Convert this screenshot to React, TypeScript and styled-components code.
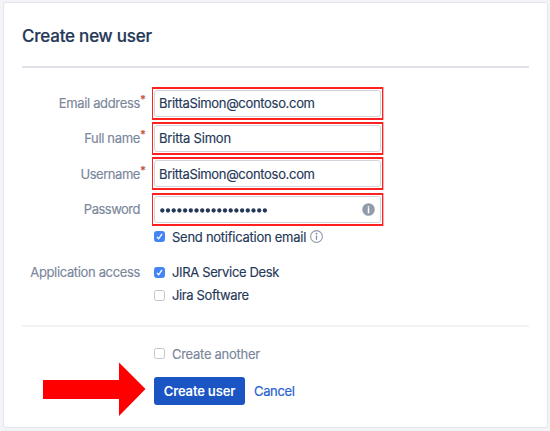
import React from "react";
import styled, { createGlobalStyle } from "styled-components";

const GlobalStyle = createGlobalStyle`
  * { box-sizing: border-box; }
  body {
    margin: 0;
    background: #f3f4f7;
    font-family: Inter, "Liberation Sans", sans-serif;
    font-size: 13px;
    color: #253858;
  }
`;

const Page = styled.div`
  width: 550px;
  height: 431px;
  padding: 2px 2px 3px 3px;
  overflow: hidden;
`;

const Card = styled.form`
  height: 426px;
  padding: 0 18px 0 18px;
  border: 1px solid #e3e5ea;
  border-radius: 3px;
  background: #fff;
`;

const Header = styled.header`
  height: 65px;
  padding-top: 21px;
  border-bottom: 2px solid #dfe2e8;
`;

const Title = styled.h1`
  margin: 0;
  font-size: 17px;
  line-height: 24px;
  font-weight: 500;
  letter-spacing: -0.22px;
  -webkit-text-stroke: 0.2px #253858;
`;

const Fields = styled.div`
  display: grid;
  gap: 2.4px;
  padding-top: 18.5px;
`;

const Row = styled.div<{ $height: number }>`
  display: grid;
  grid-template-columns: 118px 1fr;
  column-gap: 12px;
  align-items: center;
  height: ${(p) => p.$height}px;
`;

const Label = styled.label<{ $spacing: number }>`
  position: relative;
  justify-self: end;
  color: #7a869a;
  line-height: 18px;
  white-space: nowrap;
  letter-spacing: ${(p) => p.$spacing}px;
  -webkit-text-stroke: 0.15px #7a869a;
`;

const Required = styled.span`
  position: absolute;
  left: 100%;
  top: -4px;
  color: #e0452a;
  font-size: 11px;
  font-weight: 600;
`;

const Highlight = styled.div`
  width: 231px;
  height: 33px;
  padding: 1px;
  border: solid #ff2020;
  border-width: 2px 1px;
  box-shadow: 0.5px 0 0 #ff6060;
`;

const Field = styled.div`
  display: flex;
  align-items: center;
  justify-content: space-between;
  height: 27px;
  padding: 0 5px 0 4px;
  border: 1px solid #d2d5dc;
  border-radius: 3px;
  background: #fff;
`;

const Value = styled.span<{ $spacing: number }>`
  line-height: 18px;
  letter-spacing: ${(p) => p.$spacing}px;
  white-space: nowrap;
  -webkit-text-stroke: 0.15px #253858;
`;

const Options = styled.div`
  display: grid;
`;

const AccessGroup = styled.div`
  margin-top: 13px;
`;

const Option = styled.label<{ $muted?: boolean; $spacing: number }>`
  display: flex;
  align-items: center;
  gap: 7px;
  padding-left: 2px;
  line-height: 18px;
  color: ${(p) => (p.$muted ? "#7a869a" : "#253858")};
  letter-spacing: ${(p) => p.$spacing}px;
  white-space: nowrap;
  -webkit-text-stroke: 0.15px currentColor;
`;

const Box = styled.span<{ $checked?: boolean }>`
  display: grid;
  width: 11px;
  height: 11px;
  border: 1px solid ${(p) => (p.$checked ? "#4385f0" : "#c4c5c9")};
  border-radius: 2.5px;
  background: ${(p) => (p.$checked ? "#4385f5" : "#fff")};
  svg { display: block; }
`;

const Footer = styled.footer`
  margin-top: 18px;
  border-top: 2px solid #f1f2f4;
  padding-top: 15.5px;
`;

const Actions = styled.div`
  position: relative;
  display: flex;
  align-items: center;
  gap: 9px;
  height: 28px;
  margin-top: 11.5px;
  padding-left: 132px;
`;

const Submit = styled.button`
  width: 91px;
  height: 28px;
  padding: 0;
  border: 0;
  border-radius: 3px;
  background: #1b55c4;
  color: #fff;
  font: 600 13px/28px Inter, sans-serif;
  letter-spacing: -0.15px;
`;

const Cancel = styled.a`
  color: #2862cf;
  line-height: 18px;
  letter-spacing: -0.35px;
  -webkit-text-stroke: 0.2px #2862cf;
`;

const Pointer = styled.svg`
  position: absolute;
  left: 21px;
  top: -15px;
`;

const Check = ({ checked }: { checked?: boolean }) => (
  <Box $checked={checked}>
    {checked && (
      <svg width="9" height="9" viewBox="0 0 9 9">
        <path d="M2 5 3.7 6.8 7 1.9" fill="none" stroke="#fff" strokeWidth="1.3" />
      </svg>
    )}
  </Box>
);

const InfoFilled = () => (
  <svg width="13" height="13" viewBox="0 0 13 13">
    <circle cx="6.5" cy="6.5" r="6.3" fill="#929baa" />
    <circle cx="6.5" cy="3.8" r="0.9" fill="#fff" />
    <path d="M6.5 5.7v4" stroke="#fff" strokeWidth="1.5" strokeLinecap="round" />
  </svg>
);

const OutlineIcon = styled.svg`
  margin-left: -3px;
`;

const InfoOutline = () => (
  <OutlineIcon width="13" height="13" viewBox="0 0 13 13">
    <circle cx="6.5" cy="6.5" r="5.9" fill="none" stroke="#929baa" strokeWidth="1.1" />
    <circle cx="6.5" cy="3.7" r="0.85" fill="#7f8a9c" />
    <path d="M6.5 5.5v4.3" stroke="#7f8a9c" strokeWidth="1.2" />
  </OutlineIcon>
);

const DotRow = styled.svg`
  position: relative;
  top: 1px;
`;

const Dots = () => (
  <DotRow width="109" height="5" viewBox="0 0 109 5">
    {Array.from({ length: 19 }, (_, i) => (
      <circle key={i} cx={3.3 + i * 5.7} cy="2.5" r="2.15" fill="#253858" />
    ))}
  </DotRow>
);

const fields = [
  { label: "Email address", value: "BrittaSimon@contoso.com", required: true, labelSpacing: -0.34, valueSpacing: -0.32 },
  { label: "Full name", value: "Britta Simon", required: true, labelSpacing: -0.33, valueSpacing: -0.2 },
  { label: "Username", value: "BrittaSimon@contoso.com", required: true, labelSpacing: -0.45, valueSpacing: -0.32 },
  { label: "Password", value: null, required: false, labelSpacing: -0.5, valueSpacing: 0 },
];

export default function App() {
  return (
    <>
      <GlobalStyle />
      <Page>
        <Card>
          <Header>
            <Title>Create new user</Title>
          </Header>
          <Fields>
            {fields.map((f) => (
              <Row key={f.label} $height={33}>
                <Label $spacing={f.labelSpacing}>
                  {f.label}
                  {f.required && <Required>*</Required>}
                </Label>
                <Highlight>
                  <Field>
                    {f.value ? (
                      <Value $spacing={f.valueSpacing}>{f.value}</Value>
                    ) : (
                      <>
                        <Dots />
                        <InfoFilled />
                      </>
                    )}
                  </Field>
                </Highlight>
              </Row>
            ))}
          </Fields>
          <Options>
            <Row $height={22}>
              <span />
              <Option $spacing={-0.26}>
                <Check checked />
                Send notification email
                <InfoOutline />
              </Option>
            </Row>
            <AccessGroup>
              <Row $height={23}>
                <Label $spacing={-0.35}>Application access</Label>
                <Option $spacing={-0.35}>
                  <Check checked />
                  JIRA Service Desk
                </Option>
              </Row>
              <Row $height={23}>
                <span />
                <Option $spacing={-0.37}>
                  <Check />
                  Jira Software
                </Option>
              </Row>
            </AccessGroup>
          </Options>
          <Footer>
            <Row $height={23}>
              <span />
              <Option $muted $spacing={-0.28}>
                <Check />
                Create another
              </Option>
            </Row>
            <Actions>
              <Submit type="button">Create user</Submit>
              <Cancel>Cancel</Cancel>
              <Pointer width="103" height="55" viewBox="0 0 103 55">
                <path d="M0 18h76V.5L102.5 27 76 54V37H0z" fill="#f00" />
              </Pointer>
            </Actions>
          </Footer>
        </Card>
      </Page>
    </>
  );
}
